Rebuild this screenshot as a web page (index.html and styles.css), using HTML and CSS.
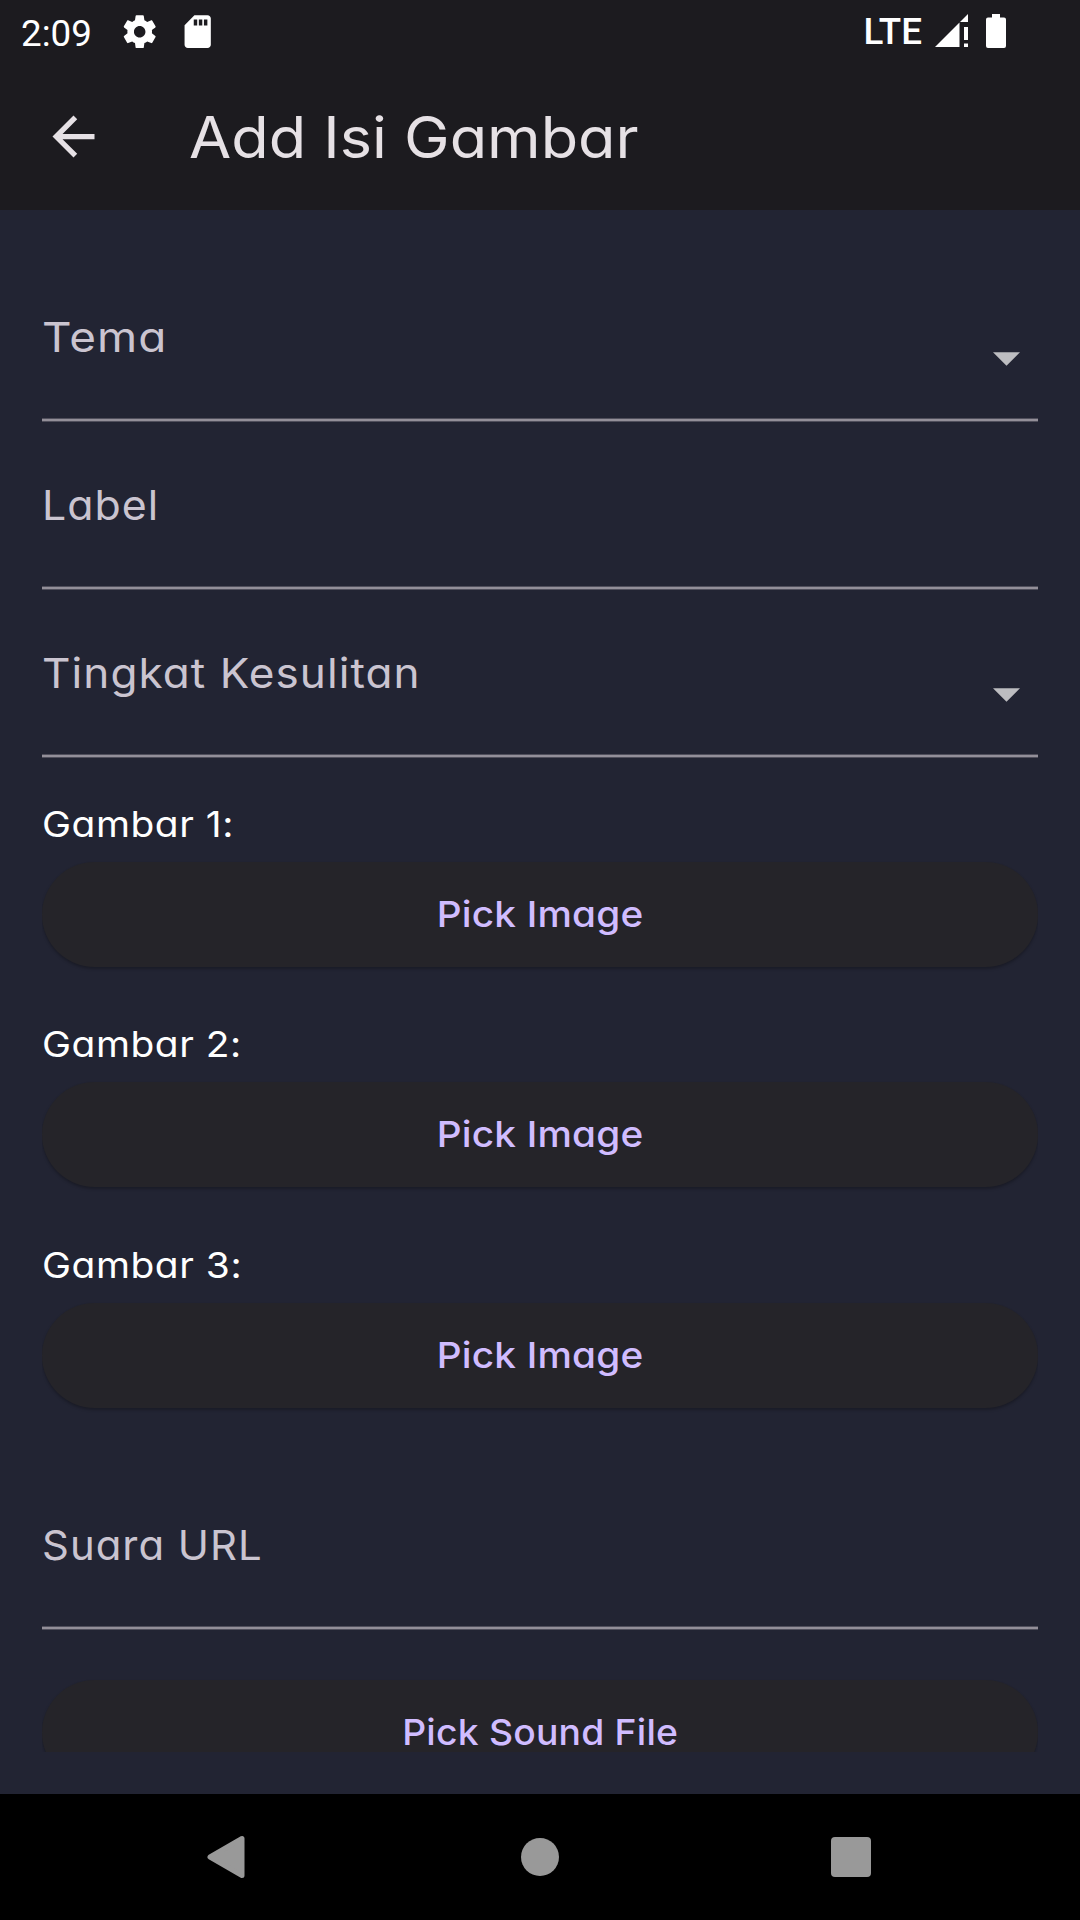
FILE: index.html
```html
<!DOCTYPE html>
<html lang="id">
<head>
<meta charset="utf-8">
<title>Add Isi Gambar</title>
<link rel="stylesheet" href="styles.css">
</head>
<body>
<div class="screen">
  <header class="header">
    <div class="status">
      <span class="time">2:09</span>
      <svg class="gear" viewBox="0 0 24 24"><path d="M19.43 12.98c.04-.32.07-.64.07-.98s-.03-.66-.07-.98l2.11-1.65c.19-.15.24-.42.12-.64l-2-3.46c-.12-.22-.39-.3-.61-.22l-2.49 1c-.52-.4-1.08-.73-1.69-.98l-.38-2.65C14.46 2.18 14.25 2 14 2h-4c-.25 0-.46.18-.49.42l-.38 2.65c-.61.25-1.17.59-1.69.98l-2.49-1c-.23-.09-.49 0-.61.22l-2 3.46c-.13.22-.07.49.12.64l2.11 1.65c-.04.32-.07.65-.07.98s.03.66.07.98l-2.11 1.65c-.19.15-.24.42-.12.64l2 3.46c.12.22.39.3.61.22l2.49-1c.52.4 1.08.73 1.69.98l.38 2.65c.03.24.24.42.49.42h4c.25 0 .46-.18.49-.42l.38-2.65c.61-.25 1.17-.59 1.69-.98l2.49 1c.23.09.49 0 .61-.22l2-3.46c.12-.22.07-.49-.12-.64l-2.11-1.65zM12 15.5c-1.93 0-3.5-1.57-3.5-3.5s1.57-3.5 3.5-3.5 3.5 1.57 3.5 3.5-1.57 3.5-3.5 3.5z"/></svg>
      <svg class="card" viewBox="0 0 24 24"><path d="M18 2h-8L4 8v12c0 1.100.9 2 2 2h12c1.100 0 2-.9 2-2V4c0-1.100-.9-2-2-2zM11.700 8.200h-2.100V4.500h2.100zM14.800 8.200h-2.100V4.500h2.100zM17.900 8.200h-2.100V4.500h2.100z"/></svg>
      <span class="network">LTE</span>
      <svg class="signal" viewBox="0 0 33 33"><path d="M0 33 24.500 8.500V33zM25 8l8-8v8zM29 13h4v13h-4zM29 29.500h4V33h-4z"/></svg>
      <svg class="battery" viewBox="0 0 20 34"><path d="M6 0h8v3.500h4a2 2 0 0 1 2 2V32a2 2 0 0 1-2 2H2a2 2 0 0 1-2-2V5.500a2 2 0 0 1 2-2h4z"/></svg>
    </div>
    <div class="toolbar">
      <svg class="back" viewBox="0 0 24 24"><path d="M20 11H7.830l5.590-5.590L12 4l-8 8 8 8 1.410-1.410L7.830 13H20z"/></svg>
      <h1 class="title">Add Isi Gambar</h1>
    </div>
  </header>
  <main class="body">
    <div class="form">
      <div class="field"><span class="hint hint-tema">Tema</span><svg class="caret" viewBox="0 0 28 14"><path d="M0 0h28L14 14z"/></svg></div>
      <div class="field"><span class="hint hint-label">Label</span></div>
      <div class="field"><span class="hint hint-level">Tingkat Kesulitan</span><svg class="caret" viewBox="0 0 28 14"><path d="M0 0h28L14 14z"/></svg></div>
      <section class="picker"><span class="caption">Gambar 1:</span><button class="pick"><span class="pick-text">Pick Image</span></button></section>
      <section class="picker picker-second"><span class="caption">Gambar 2:</span><button class="pick"><span class="pick-text">Pick Image</span></button></section>
      <section class="picker"><span class="caption">Gambar 3:</span><button class="pick"><span class="pick-text">Pick Image</span></button></section>
      <div class="field field-sound"><span class="hint hint-sound">Suara URL</span></div>
      <button class="pick pick-sound"><span class="pick-text">Pick Sound File</span></button>
    </div>
  </main>
  <nav class="nav">
    <svg class="nav-icon" viewBox="0 0 44 44"><path d="M3 22 35 3.500v37z" stroke-width="5" stroke-linejoin="round"/></svg>
    <svg class="nav-icon" viewBox="0 0 44 44"><circle cx="22" cy="22" r="19"/></svg>
    <svg class="nav-icon" viewBox="0 0 44 44"><rect x="2" y="2" width="40" height="40" rx="4"/></svg>
  </nav>
</div>
</body>
</html>
```
FILE: styles.css
```css
* { box-sizing: border-box; }
body {
  margin: 0;
  background: #222433;
  font-family: Inter, "Open Sans", sans-serif;
  font-feature-settings: "cv11" 1;
}
svg { display: block; flex: none; }
.screen {
  width: 1080px;
  height: 1920px;
  display: flex;
  flex-direction: column;
  overflow: hidden;
}
.header { height: 210px; flex: none; background: #1c1b1f; }
.status {
  height: 63px;
  padding: 0 74px 0 21px;
  display: flex;
  align-items: center;
  color: #fff;
  fill: #fff;
  font: 36.75px/63px Roboto, sans-serif;
}
.time { width: 99px; padding-top: 3px; }
.gear { width: 39.400px; height: 39.400px; }
.card { width: 39.400px; height: 39.400px; margin-left: 19px; }
.network { margin-left: auto; font-weight: 500; }
.signal { width: 33px; height: 33px; margin-left: 13px; margin-top: -2px; }
.battery { width: 20px; height: 34px; margin-left: 18px; margin-top: -1px; }
.toolbar {
  height: 147px;
  padding-left: 42px;
  display: flex;
  align-items: center;
}
.back { width: 63px; height: 63px; fill: #e6e1e5; }
.title {
  margin: 3px 0 0 84px;
  color: #e6e1e5;
  font-size: 57px;
  font-weight: 400;
  line-height: 80px;
  letter-spacing: 0;
  white-space: nowrap;
  transform: scaleX(1.073);
  transform-origin: 0 50%;
}
.body { height: 1584px; flex: none; padding: 42px; }
.form { height: 1500px; overflow: hidden; padding-top: 2px; }
.field {
  height: 168px;
  padding: 55px 18px 0 0;
  display: flex;
  align-items: flex-start;
  justify-content: space-between;
  background: linear-gradient(#504f5c 0 1px, #938f99 1px 3px, #504f5c 3px) bottom / 100% 4px no-repeat;
}
.hint {
  color: #cac4d0;
  font-size: 41px;
  line-height: 56px;
  letter-spacing: 1px;
  white-space: nowrap;
  transform-origin: 0 50%;
}
.hint-tema { transform: scaleX(1.118); }
.hint-label { transform: scaleX(1.045); }
.hint-level { transform: scaleX(1.075); }
.hint-sound { transform: scaleX(1.021); }
.caret { width: 27px; height: 14px; margin-top: 43px; fill: #bdbdc1; }
.picker { height: 220px; padding-top: 38px; }
.picker-second { height: 221px; }
.caption {
  display: block;
  height: 66px;
  color: #fff;
  font-size: 36px;
  line-height: 57px;
  letter-spacing: 0.500px;
  transform: scaleX(1.080);
  transform-origin: 0 50%;
}
.pick {
  display: flex;
  align-items: center;
  justify-content: center;
  width: 100%;
  height: 105px;
  padding: 0;
  border: 0;
  border-radius: 53px;
  background: #252429;
  box-shadow: 0 2px 3px rgba(0, 0, 0, 0.25);
  color: #d0bcff;
  font: 500 36px/37px Inter, sans-serif;
  font-feature-settings: inherit;
  letter-spacing: 0.200px;
}
.pick-text { transform: scaleX(1.076); }
.field-sound { margin-top: 43px; }
.pick-sound { margin-top: 50px; }
.pick-sound .pick-text { transform: scaleX(1.036); }
.nav {
  height: 126px;
  padding: 0 207px;
  display: flex;
  align-items: center;
  justify-content: space-between;
  background: #000;
}
.nav-icon { width: 44px; height: 44px; fill: #999; stroke: #999; stroke-width: 0; }
```
